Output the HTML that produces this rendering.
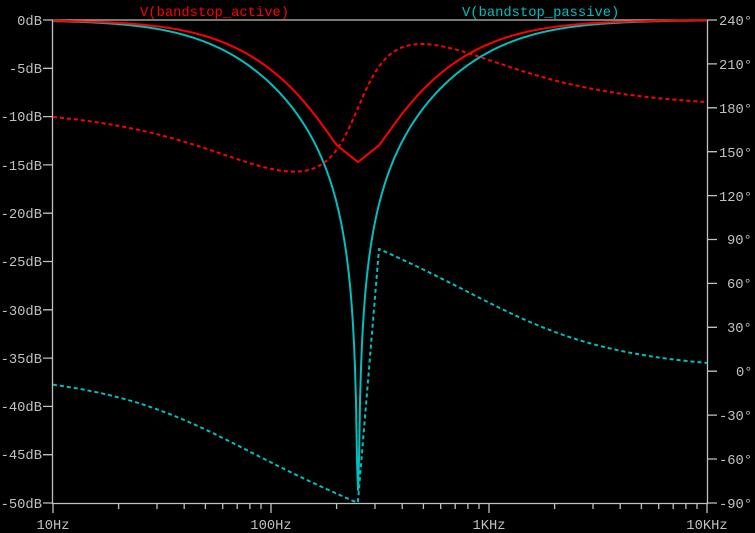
<!DOCTYPE html>
<html><head><meta charset="utf-8"><style>
html,body{margin:0;padding:0;background:#000;width:755px;height:533px;overflow:hidden}
svg{display:block}
text{font-family:"Liberation Mono","DejaVu Sans Mono",monospace;font-size:13.8px;fill:#c0c0c0}
</style></head><body>
<svg id="s" width="755" height="533" viewBox="0 0 755 533" xmlns="http://www.w3.org/2000/svg">
<g stroke="#c0c0c0" stroke-width="1.3" fill="none">
<path d="M52.5 20H707.5V503.5H52.5Z"/>
<path d="M43 20H52M43 68.3H52M43 116.6H52M43 164.9H52M43 213.2H52M43 261.5H52M43 309.8H52M43 358.1H52M43 406.4H52M43 454.7H52M43 503H52"/>
<path d="M708 20H717M708 63.9H717M708 107.8H717M708 151.7H717M708 195.6H717M708 239.5H717M708 283.4H717M708 327.3H717M708 371.2H717M708 415.1H717M708 459H717M708 503H717"/>
<path d="M53 504V513M271 504V513M489 504V513M707 504V513"/>
<path d="M118.6 504V509M157 504V509M184.2 504V509M205.4 504V509M222.7 504V509M237.2 504V509M249.9 504V509M261 504V509
M336.6 504V509M375 504V509M402.2 504V509M423.4 504V509M440.7 504V509M455.2 504V509M467.9 504V509M479 504V509
M554.6 504V509M593 504V509M620.2 504V509M641.4 504V509M658.7 504V509M673.2 504V509M685.9 504V509M697 504V509"/>
</g>
<g text-anchor="end">
<text x="42" y="25">0dB</text><text x="42" y="73">-5dB</text><text x="42" y="121">-10dB</text><text x="42" y="170">-15dB</text><text x="42" y="218">-20dB</text><text x="42" y="266">-25dB</text><text x="42" y="315">-30dB</text><text x="42" y="363">-35dB</text><text x="42" y="411">-40dB</text><text x="42" y="459">-45dB</text><text x="42" y="508">-50dB</text>
</g>
<g>
<text x="719" y="25">240°</text><text x="719" y="69">210°</text><text x="719" y="113">180°</text><text x="719" y="157">150°</text><text x="719" y="201">120°</text><text x="727" y="244">90°</text><text x="727" y="288">60°</text><text x="727" y="332">30°</text><text x="736" y="376">0°</text><text x="719" y="420">-30°</text><text x="719" y="464">-60°</text><text x="719" y="508">-90°</text>
</g>
<g text-anchor="middle">
<text x="53" y="529">10Hz</text><text x="271" y="529">100Hz</text><text x="489" y="529">1KHz</text><text x="707" y="529">10KHz</text>
</g>
<text x="140" y="16" style="fill:#ff0000">V(bandstop_active)</text>
<text x="462" y="16" style="fill:#00bfbf">V(bandstop_passive)</text>
<g fill="none" stroke-width="2" stroke-linejoin="round">
<polyline id="cm" stroke="#00bfbf" points="53,20 707,20"/>
<polyline id="rm" stroke="#ff0000" points="53,20 707,20"/>
<polyline id="rp" stroke="#ff0000" stroke-dasharray="4,3" points="53,117 707,101"/>
<polyline id="cp" stroke="#00bfbf" stroke-dasharray="4,3" points="53,384 707,363"/>
</g>
</svg>
<script>
(function(){
var X0=358,Qp=0.296,Qz=1.61,Q=0.25;
function u(x){return Math.pow(10,(x-X0)/218);}
function ydb(d){if(d<-49)d=-49;return 20-d*9.66;}
function yph(p){return 20+(240-p)*1.464;}
var D=180/Math.PI;
function red(x){var v=u(x),a=1-v*v;var n=Math.sqrt(a*a+(v/Qz)*(v/Qz)),d=Math.sqrt(a*a+(v/Qp)*(v/Qp));
return [ydb(20*Math.log10(n/d)),yph(180+D*Math.atan2(v/Qz,a)-D*Math.atan2(v/Qp,a))];}
function cy(x){var v=u(x),a=1-v*v;var m=Math.abs(a)/Math.sqrt(a*a+(v/Q)*(v/Q));
var ph=(a>=0?0:180)-D*Math.atan2(v/Q,a);return [ydb(20*Math.log10(Math.max(m,1e-9))),yph(ph)];}
var rm=[],rp=[],cm=[],cp=[],x;
for(x=53;x<=707;x+=1){
 var r=red(x);
 if(x<337||x>379){rm.push(x+','+r[0].toFixed(1));}
 else if(x==337||x==379){rm.push(x+','+r[0].toFixed(1));}
 else if(x==358){rm.push('358,'+r[0].toFixed(1));}
 rp.push(x+','+r[1].toFixed(1));
 var c=cy(x);
 if(Math.abs(x-X0)<1e-6){cm.push('358,490');}else cm.push(x+','+c[0].toFixed(1));
 if(x<358||x>=379)cp.push(x+','+c[1].toFixed(1));
 if(x==357){cp.push('358,501');}
}
document.getElementById('rm').setAttribute('points',rm.join(' '));
document.getElementById('rp').setAttribute('points',rp.join(' '));
document.getElementById('cm').setAttribute('points',cm.join(' '));
document.getElementById('cp').setAttribute('points',cp.join(' '));
})();
</script>
</body></html>
